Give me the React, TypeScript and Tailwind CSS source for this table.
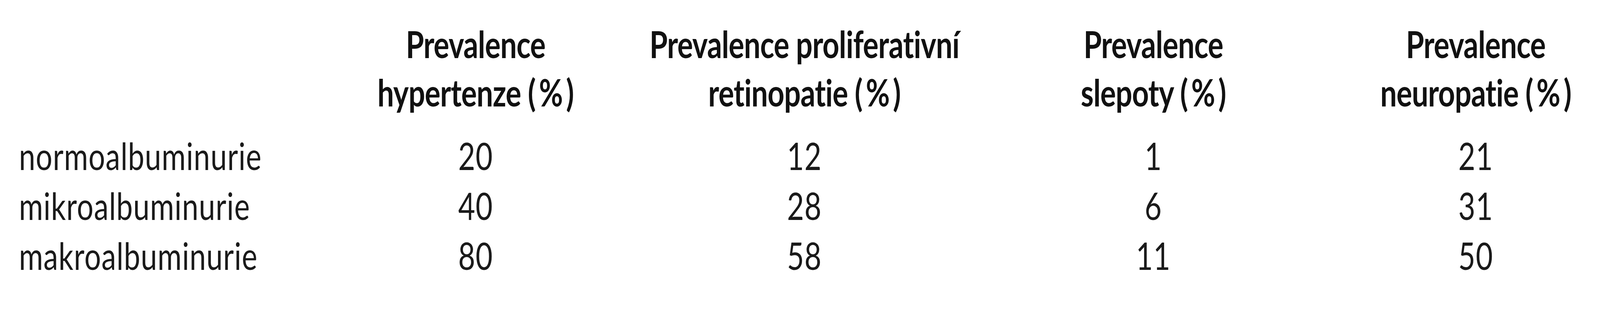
import React from 'react';

// The table is laid out on the 5241px design width; if the window is narrower
// it is squeezed horizontally so that its proportions stay the same.
const DESIGN_WIDTH = 5241;

const colClasses = [
  'w-[720px]',
  'ml-[157px] w-[1120px]',
  'ml-[223px] w-[720px]',
  'ml-[336px] w-[720px]',
];

const headers: [string, string][] = [
  ['Prevalence', 'hypertenze'],
  ['Prevalence proliferativní', 'retinopatie'],
  ['Prevalence', 'slepoty'],
  ['Prevalence', 'neuropatie'],
];

const rows: { label: string; values: number[] }[] = [
  { label: 'normoalbuminurie', values: [20, 12, 1, 21] },
  { label: 'mikroalbuminurie', values: [40, 28, 6, 31] },
  { label: 'makroalbuminurie', values: [80, 58, 11, 50] },
];

export default function App() {
  const k = typeof window !== 'undefined' ? Math.min(1, window.innerWidth / DESIGN_WIDTH) : 1;

  return (
    <div className="w-full h-[800px] overflow-hidden bg-white">
      <div
        className="w-[5241px] h-[800px] origin-top-left text-[#1a1a1a] font-['Lato',sans-serif] pl-[62px] pt-[50px]"
        style={{ transform: `scaleX(${k})` }}
      >
        {/* header */}
        <div className="flex text-[96px] leading-[124px] font-bold tracking-[-1px] text-[#111]">
          <div className="w-[1136px]" />
          {headers.map((h, i) => (
            <div key={i} className={`${colClasses[i]} text-center whitespace-nowrap`}>
              {h[0]}
              <br />
              {h[1]} <span className="tracking-[10px]">(%</span>)
            </div>
          ))}
        </div>

        {/* body */}
        <div className="mt-[37px] text-[96px] leading-[128px] tracking-[1.5px]">
          {rows.map((r) => (
            <div key={r.label} className="flex">
              <div className="w-[1136px] whitespace-nowrap">{r.label}</div>
              {r.values.map((v, i) => (
                <div key={i} className={`${colClasses[i]} text-center`}>
                  {v}
                </div>
              ))}
            </div>
          ))}
        </div>
      </div>
    </div>
  );
}
